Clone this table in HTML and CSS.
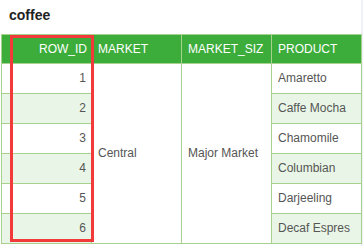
FILE: index.html
```html
<!DOCTYPE html>
<html>
<head>
<meta charset="utf-8">
<link rel="stylesheet" href="styles.css">
</head>
<body>
<div class="panel">
  <div class="title">coffee</div>
  <div class="table-wrap">
    <table class="grid">
      <colgroup><col class="c"><col class="c"><col class="c"><col class="c"></colgroup>
      <thead>
        <tr><th class="num"><div class="cell">ROW_ID</div></th><th><div class="cell">MARKET</div></th><th><div class="cell">MARKET_SIZ</div></th><th><div class="cell">PRODUCT</div></th></tr>
      </thead>
      <tbody>
        <tr><td class="num"><div class="cell">1</div></td><td class="merged" rowspan="6"><div class="cell">Central</div></td><td class="merged" rowspan="6"><div class="cell">Major Market</div></td><td><div class="cell">Amaretto</div></td></tr>
        <tr class="alt"><td class="num"><div class="cell">2</div></td><td><div class="cell">Caffe Mocha</div></td></tr>
        <tr><td class="num"><div class="cell">3</div></td><td><div class="cell">Chamomile</div></td></tr>
        <tr class="alt"><td class="num"><div class="cell">4</div></td><td><div class="cell">Columbian</div></td></tr>
        <tr><td class="num"><div class="cell">5</div></td><td><div class="cell">Darjeeling</div></td></tr>
        <tr class="alt"><td class="num"><div class="cell">6</div></td><td><div class="cell">Decaf Espres</div></td></tr>
      </tbody>
    </table>
    <div class="highlight"></div>
  </div>
</div>
</body>
</html>
```
FILE: styles.css
```css
html, body {
  margin: 0;
  padding: 0;
}
body {
  background: #edf2f8;
  font-family: "Liberation Sans", Arial, sans-serif;
}
.panel {
  width: 361px;
  height: 246px;
  background: #ffffff;
}
.title {
  box-sizing: border-box;
  height: 34px;
  padding: 7px 0 0 9px;
  font-size: 14px;
  line-height: 16px;
  font-weight: bold;
  color: #222;
}
.table-wrap {
  position: relative;
  padding-left: 1px;
}
.grid {
  border-collapse: separate;
  border-spacing: 0;
  table-layout: fixed;
  width: 361px;
  border-top: 1px solid #a9d18e;
  border-left: 1px solid #a9d18e;
  font-size: 12px;
}
.grid col.c {
  width: 90px;
}
.grid th, .grid td {
  border-right: 1px solid #a9d18e;
  border-bottom: 1px solid #a9d18e;
  text-align: left;
  padding: 0 6px;
  overflow: hidden;
}
.cell {
  white-space: nowrap;
  overflow: hidden;
}
.grid th {
  background: #3cad3b;
  color: #ffffff;
  font-weight: normal;
  line-height: 28px;
}
.grid td {
  color: #555;
  line-height: 29px;
  background: #ffffff;
}
.grid tr.alt td {
  background: #e9f6e7;
}
.grid td.merged {
  background: #ffffff;
  vertical-align: middle;
}
.grid .num {
  text-align: right;
  padding-right: 4px;
}
.grid td.num {
  padding-right: 5px;
}
.highlight {
  position: absolute;
  left: 10px;
  top: 1px;
  width: 84px;
  height: 207px;
  box-sizing: border-box;
  border: 3px solid #f23a3a;
  pointer-events: none;
}
```
